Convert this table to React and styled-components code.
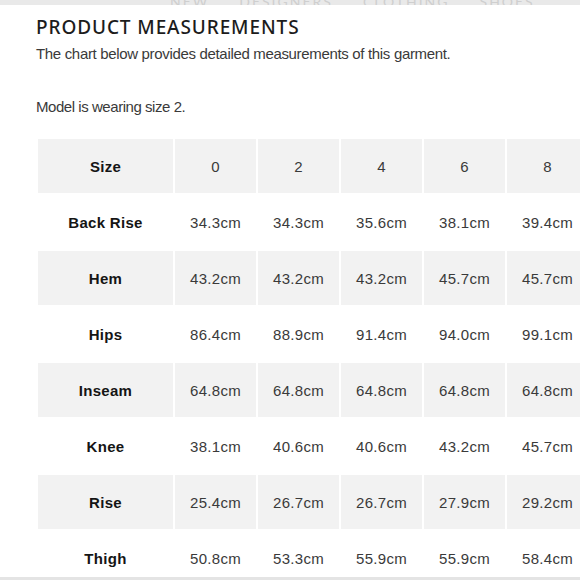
import React from 'react';
import styled, { createGlobalStyle } from 'styled-components';

const GlobalStyle = createGlobalStyle`
  body {
    margin: 0;
    background: #ffffff;
    overflow: hidden;
  }
`

const Page = styled.div`
  width: 580px;
  height: 580px;
  overflow: hidden;
  position: relative;
  font-family: "Liberation Sans", Arial, sans-serif;
`

const TopBar = styled.div`
  height: 5px;
  background: #e9e9e9;
  overflow: hidden;
  display: flex;
  align-items: flex-end;
  padding-left: 170px;
  gap: 30px;
`

const NavItem = styled.span`
  font-family: Lato, sans-serif;
  font-size: 14px;
  line-height: 7px;
  letter-spacing: 2px;
  color: #cfcfcf;
  white-space: nowrap;
`

const Content = styled.div`
  padding: 10px 0 0 36px;
`

const Heading = styled.h1`
  margin: 0;
  font-family: "Noto Sans", sans-serif;
  font-weight: 500;
  font-size: 19px;
  line-height: 24px;
  letter-spacing: 0.9px;
  color: #1c1c1c;
`

const Para = styled.p`
  margin: ${p => p.$top}px 0 0;
  font-size: 15px;
  line-height: 18px;
  color: #3a3a3a;
  letter-spacing: ${p => p.$track}px;
`

const Table = styled.table`
  margin: 21px 0 0 0;
  width: 554px;
  border-collapse: separate;
  border-spacing: 2px;
  table-layout: fixed;
`

const Cell = styled.td`
  width: ${p => (p.$label ? 135 : 81)}px;
  height: 54px;
  padding: 0;
  text-align: center;
  vertical-align: middle;
  background: ${p => (p.$shade ? '#f2f2f2' : '#ffffff')};
  font-size: 15px;
  letter-spacing: 0.3px;
  font-weight: ${p => (p.$label ? 700 : 400)};
  color: ${p => (p.$label ? '#151515' : '#3a3a3a')};
  white-space: nowrap;
`

const BottomBar = styled.div`
  position: absolute;
  left: 0;
  right: 0;
  bottom: 0;
  height: 3px;
  background: #e4e4e4;
`

const rows = [
  ['Size', '0', '2', '4', '6', '8'],
  ['Back Rise', '34.3cm', '34.3cm', '35.6cm', '38.1cm', '39.4cm'],
  ['Hem', '43.2cm', '43.2cm', '43.2cm', '45.7cm', '45.7cm'],
  ['Hips', '86.4cm', '88.9cm', '91.4cm', '94.0cm', '99.1cm'],
  ['Inseam', '64.8cm', '64.8cm', '64.8cm', '64.8cm', '64.8cm'],
  ['Knee', '38.1cm', '40.6cm', '40.6cm', '43.2cm', '45.7cm'],
  ['Rise', '25.4cm', '26.7cm', '26.7cm', '27.9cm', '29.2cm'],
  ['Thigh', '50.8cm', '53.3cm', '55.9cm', '55.9cm', '58.4cm'],
]

export default function App() {
  return (
    <Page>
      <GlobalStyle />
      <TopBar>
        <NavItem>NEW</NavItem>
        <NavItem>DESIGNERS</NavItem>
        <NavItem>CLOTHING</NavItem>
        <NavItem>SHOES</NavItem>
      </TopBar>
      <Content>
        <Heading>PRODUCT MEASUREMENTS</Heading>
        <Para $top={6} $track={-0.33}>The chart below provides detailed measurements of this garment.</Para>
        <Para $top={35} $track={-0.45}>Model is wearing size 2.</Para>
        <Table>
          <tbody>
            {rows.map((row, i) => (
              <tr key={row[0]}>
                {row.map((val, j) => (
                  <Cell key={j} $label={j === 0} $shade={i % 2 === 0}>{val}</Cell>
                ))}
              </tr>
            ))}
          </tbody>
        </Table>
      </Content>
      <BottomBar />
    </Page>
  )
}
